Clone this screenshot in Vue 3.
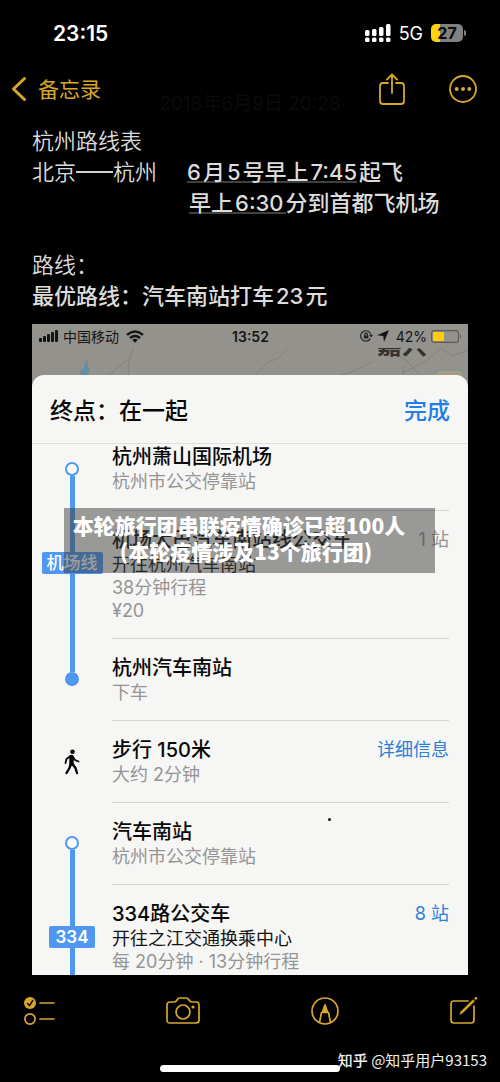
<script setup>
const stops = [
  { node: 'open', title: '杭州萧山国际机场', lines: ['杭州市公交停靠站'], first: true },
  {
    node: 'badge', badge: '机场线', title: '机场大巴汽车南站线公交车', toward: '开往杭州汽车南站',
    lines: ['38分钟行程', '¥20'], count: '1 站'
  },
  { node: 'closed', title: '杭州汽车南站', lines: ['下车'] },
  { node: 'walk', title: '步行 150米', lines: ['大约 2分钟'], link: '详细信息' },
  { node: 'open', title: '汽车南站', lines: ['杭州市公交停靠站'], speck: true },
  {
    node: 'badge', badge: '334', title: '334路公交车', toward: '开往之江交通换乘中心',
    lines: ['每 20分钟 · 13分钟行程'], link: '8 站', last: true
  }
]
</script>

<template>
  <div class="screen">
    <header>
      <div class="status">
        <time class="clock">23:15</time>
        <div class="status-right">
          <svg width="26" height="18" viewBox="0 0 26 18" fill="#fff" aria-hidden="true">
            <rect x="0" y="6" width="4.500" height="6" rx="1.500" /><rect x="7" y="5" width="4.500" height="7" rx="1.500" />
            <rect x="14" y="3" width="4.500" height="9" rx="1.500" /><rect x="21" y="0" width="4.500" height="12" rx="1.500" />
            <rect x="0" y="13.500" width="4.500" height="4.500" rx="1.500" /><rect x="7" y="13.500" width="4.500" height="4.500" rx="1.500" />
            <rect x="14" y="13.500" width="4.500" height="4.500" rx="1.500" /><rect x="21" y="13.500" width="4.500" height="4.500" rx="1.500" />
          </svg>
          <span class="network">5G</span>
          <span class="battery"><span class="battery-body">27</span><i class="battery-tip"></i></span>
        </div>
      </div>

      <nav class="nav">
        <button class="back" type="button">
          <svg width="16" height="26" viewBox="0 0 16 26" fill="none" stroke="currentColor" stroke-width="3" stroke-linecap="round" stroke-linejoin="round" aria-hidden="true">
            <path d="M13.500 2.500L2.500 13L13.500 23.500" />
          </svg>
          <span>备忘录</span>
        </button>
        <span class="edited">2018年6月9日 20:28</span>
        <div class="nav-actions">
          <button type="button" aria-label="共享">
            <svg width="26" height="32" viewBox="0 0 26 32" fill="none" stroke="currentColor" stroke-width="1.800" stroke-linecap="round" stroke-linejoin="round">
              <path d="M9 10H4Q1 10 1 13V28Q1 31 4 31H22Q25 31 25 28V13Q25 10 22 10H17M13 20V1.500M8 6.500L13 1.500L18 6.500" />
            </svg>
          </button>
          <button type="button" aria-label="更多">
            <svg width="28" height="28" viewBox="0 0 28 28" fill="none" stroke="currentColor" stroke-width="1.800">
              <circle cx="14" cy="14" r="13" />
              <g fill="currentColor" stroke="none"><circle cx="7.700" cy="14" r="2" /><circle cx="14" cy="14" r="2" /><circle cx="20.300" cy="14" r="2" /></g>
            </svg>
          </button>
        </div>
      </nav>
    </header>

    <main>
      <section class="note">
        <p class="plain">杭州路线表</p>
        <div class="flight">
          <p class="plain">北京<i class="dash"></i>杭州</p>
          <div class="strong">
            <p><u>6<span class="num-side">月</span>5<span class="num-side">号早上</span>7:45</u><span class="num-side">起飞</span></p>
            <p class="second"><u>早上<span class="num-side">6:30</span></u>分到首都飞机场</p>
          </div>
        </div>
        <p class="plain gap">路线：</p>
        <p class="strong">最优路线：汽车南站打车<span class="num-side">23</span>元</p>
      </section>

      <section class="shot">
        <div class="shot-status">
          <div class="carrier">
            <svg width="20" height="12" viewBox="0 0 20 12" fill="#151515" aria-hidden="true">
              <rect x="0" y="8" width="3" height="4" rx="1" /><rect x="4" y="6" width="3" height="6" rx="1" /><rect x="8" y="4" width="3" height="8" rx="1" /><rect x="12" y="2" width="3" height="10" rx="1" /><rect x="16" y="0" width="3" height="12" rx="1" />
            </svg>
            <span>中国移动</span>
            <svg class="wifi" width="18" height="13" viewBox="0 0 18 13" fill="none" stroke="#151515" stroke-width="2.400" aria-hidden="true">
              <path d="M1 4.800Q9 -2 17 4.800M4 8Q9 3.800 14 8" /><path d="M6.200 9.800Q9 7.600 11.800 9.800L9 12.800Z" fill="#151515" stroke="none" />
            </svg>
          </div>
          <time>13:52</time>
          <div class="indicators">
            <svg width="13" height="12" viewBox="0 0 13 12" fill="none" stroke="#222" stroke-width="1.200" aria-hidden="true">
              <path d="M10.400 8.600A5.200 5.200 0 1 1 11 5" /><path d="M9.200 5H13L11.100 7.500Z" fill="#222" stroke="none" />
              <rect x="3.800" y="5.300" width="4.600" height="3.200" fill="#222" stroke="none" /><path d="M4.700 5.500V4Q6.100 2.200 7.500 4V5.500" />
            </svg>
            <svg width="12" height="12" viewBox="0 0 12 12" fill="#151515" aria-hidden="true"><path d="M12 0L7 12L6.200 6L0 5.200Z" /></svg>
            <span>42%</span>
            <svg class="cell" width="31" height="13" viewBox="0 0 31 13" aria-hidden="true">
              <rect x="0.600" y="0.600" width="26.800" height="11.800" rx="2.500" fill="none" stroke="#5d5c58" stroke-width="1.200" />
              <rect x="2" y="2" width="11" height="9" rx="1" fill="#ffcb0c" /><path d="M29 4Q31 6.500 29 9Z" fill="#5d5c58" />
            </svg>
          </div>
        </div>
        <svg class="map" width="100%" height="40" viewBox="0 0 436 40" preserveAspectRatio="none" aria-hidden="true">
          <g fill="none" stroke="#83827e" stroke-width="1">
            <path d="M102 0Q94 15 97 28M99 8L88 18L75 28M255 0L247 10L236 14L224 27M341 13Q330 20 319 24L307 28M409 0L394 13L370 25M362 4L377 15L388 28M374 17Q369 22 373 29M409 0L420 8L436 2" />
          </g>
          <path d="M53 14L56 12V19L58 22L55 28H49L48 23L52 20Z" fill="#668da0" />
          <rect x="404" y="22" width="27" height="16" rx="2" fill="#a69b82" stroke="#71968a" />
          <text x="345" y="6" class="city">嘉兴</text>
        </svg>

        <div class="sheet">
          <div class="sheet-head">
            <h1>终点：在一起</h1>
            <button type="button">完成</button>
          </div>
          <ol class="steps">
            <li v-for="(s, i) in stops" :key="i" class="step" :class="{ first: s.first, last: s.last }">
              <div class="rail" :class="s.node">
                <i class="seg upper"></i>
                <svg v-if="s.node === 'walk'" width="16" height="26" viewBox="0 0 16 26" fill="none" stroke="#080808" stroke-linecap="round" stroke-linejoin="round" aria-label="步行">
                  <circle cx="8.500" cy="2.800" r="2.300" fill="#080808" stroke="none" />
                  <path d="M7.500 8V15" stroke-width="4.400" /><path d="M6.500 7L2.500 10L1.500 14M9 8L11 11L14.500 12.500" stroke-width="1.900" /><path d="M6.500 15.500L5.500 19L2.500 24M8.500 15L11.500 19L13 24" stroke-width="2.400" />
                </svg>
                <span v-else class="node">{{ s.badge }}</span>
                <i class="seg lower"></i>
              </div>
              <div class="detail">
                <div>
                  <h2>{{ s.title }}</h2>
                  <p v-if="s.toward" class="toward">{{ s.toward }}</p>
                  <p v-for="l in s.lines" :key="l">{{ l }}</p>
                </div>
                <a v-if="s.link" href="#">{{ s.link }}</a>
                <span v-else-if="s.count" class="count">{{ s.count }}</span>
                <i v-if="s.speck" class="speck"></i>
              </div>
            </li>
          </ol>
        </div>

        <div class="caption">
          <p class="caption-top">本轮旅行团串联疫情确诊已超100人</p>
          <p>(本轮疫情涉及13个旅行团)</p>
        </div>
      </section>
    </main>

    <footer>
      <div class="tools">
        <button type="button" aria-label="核对清单">
          <svg width="31" height="28" viewBox="0 0 31 28" fill="none" stroke="currentColor" stroke-width="1.700" stroke-linecap="round">
            <circle cx="6" cy="6" r="6" fill="currentColor" stroke="none" /><path d="M3.500 6.500L5.500 8.500L8.800 3.500" stroke="#17130a" stroke-width="1.500" />
            <circle cx="6" cy="22" r="5.100" /><path d="M16 6H30M16 22H30" />
          </svg>
        </button>
        <button type="button" aria-label="相机">
          <svg width="34" height="28" viewBox="0 0 34 28" fill="none" stroke="currentColor" stroke-width="1.700" stroke-linejoin="round">
            <path d="M4 5H8Q10 5 11 3Q12 1 14 1H20Q22 1 23 3Q24 5 26 5H30Q33 5 33 8V23Q33 26 30 26H4Q1 26 1 23V8Q1 5 4 5Z" />
            <circle cx="17" cy="15" r="7" /><circle cx="27" cy="10" r="1.600" fill="currentColor" stroke="none" />
          </svg>
        </button>
        <button type="button" aria-label="标记">
          <svg width="28" height="28" viewBox="0 0 28 28" fill="none" stroke="currentColor" stroke-width="1.700" stroke-linejoin="round">
            <circle cx="14" cy="14" r="13" /><path d="M8.500 25.500L10.500 15.500H17.500L19.500 25.500" /><path d="M10.500 15.500L13 8Q14 6 15 8L17.500 15.500Z" fill="currentColor" stroke="none" />
          </svg>
        </button>
        <button type="button" aria-label="新建">
          <svg width="28" height="28" viewBox="0 0 28 28" fill="none" stroke="currentColor" stroke-width="1.700" stroke-linecap="round" stroke-linejoin="round">
            <path d="M18 4H4Q1 4 1 7V23Q1 26 4 26H21Q24 26 24 23V9" /><path d="M10 17L11 14.500L23 2.700L24.500 4.200L12.500 16Z" fill="currentColor" stroke-width="0.600" /><path d="M25.600 1.600L26 1.200" stroke-width="2.400" />
          </svg>
        </button>
      </div>
      <div class="home"></div>
      <p class="credit"><b>知乎</b> @知乎用户93153</p>
    </footer>
  </div>
</template>

<style>
body { background: #000; }
</style>

<style scoped>
* { box-sizing: border-box; }
p, h1, h2, ol { margin: 0; padding: 0; }
button { padding: 0; border: 0; background: none; color: inherit; font: inherit; cursor: pointer; }
svg { display: block; flex: none; }

.screen {
  display: flex;
  flex-direction: column;
  min-height: 100vh;
  background: #000;
  color: #dcdcdc;
  font-family: Inter, "Noto Sans CJK SC", sans-serif;
}

.status { display: flex; align-items: center; justify-content: space-between; height: 66px; padding: 0 34px 0 53px; color: #fff; }
.clock { font-size: 21px; font-weight: 600; }
.status-right { display: flex; align-items: center; gap: 8px; }
.network { font-size: 18px; }
.battery { display: flex; align-items: center; gap: 1px; }
.battery-body {
  width: 32px; border-radius: 5px; line-height: 18px; text-align: center;
  background: linear-gradient(90deg, #fdd20d 9px, #818181 9px);
  color: #0a0a0a; font-size: 16px; font-weight: 700;
}
.battery-tip { width: 2px; height: 6px; border-radius: 0 2px 2px 0; background: #818181; }

.nav { position: relative; display: flex; align-items: center; justify-content: space-between; height: 45px; padding: 0 23px 0 11px; color: #d9a62c; }
.back { display: flex; align-items: center; gap: 11px; font-size: 21px; }
.back span { padding-bottom: 2px; }
.edited { position: absolute; inset: auto 0 -4px; text-align: center; font-size: 19px; line-height: 22px; color: #0b0b0b; pointer-events: none; }
.nav-actions { display: flex; align-items: center; gap: 44px; }

.note { padding: 15px 32px 12px; font-size: 22px; line-height: 31px; }
.plain { font-weight: 350; }
.flight { display: flex; gap: 30px; }
.dash { display: inline-block; width: 37px; height: 2px; vertical-align: 7px; background: #d0d0d0; }
.strong { font-weight: 500; }
.second { padding-left: 2px; }
.gap { padding-top: 31px; }
.num-side { margin: 0 2px; }
u { text-decoration: none; background: linear-gradient(#404040, #404040) 0 calc(100% - 2px) / 100% 2px no-repeat; }

.shot { position: relative; margin: 0 32px; background: #94928d; color: #151515; }
.shot-status { display: grid; grid-template-columns: 1fr auto 1fr; align-items: center; height: 24px; padding: 0 6px 0 7px; font-size: 14px; }
.shot-status time { font-weight: 600; }
.carrier, .indicators { display: flex; align-items: center; gap: 4px; }
.wifi { margin-left: 3px; }
.indicators { justify-content: flex-end; }
.indicators span { margin-left: 3px; }
.map { margin-bottom: -13px; overflow: hidden; }
.city { font-size: 25px; font-weight: 700; fill: #33322f; }

.sheet { position: relative; border-radius: 12px 12px 0 0; background: #f6f6f4; color: #080808; }
.sheet-head { display: flex; align-items: center; justify-content: space-between; height: 69px; padding: 0 18px; border-bottom: 1px solid #dededc; }
h1 { font-size: 23px; font-weight: 500; }
.sheet-head button { color: #217fe5; font-size: 23px; font-weight: 500; }

.steps { list-style: none; }
.step { display: grid; grid-template-columns: 80px 1fr; }
.detail { position: relative; display: flex; justify-content: space-between; margin-right: 19px; padding: 16px 0; border-bottom: 1px solid #d3d3d2; font-size: 18px; line-height: 23px; color: #949494; }
h2 { font-size: 20px; font-weight: 500; line-height: 26px; color: #080808; }
.toward { color: #141414; }
.detail a, .count { line-height: 26px; }
.detail a { color: #2b80d8; text-decoration: none; }
.first .detail { padding: 0 0 17px; }
.last .detail { padding-bottom: 2px; border-bottom: 0; }
.speck { position: absolute; left: 216px; top: 15px; width: 3px; height: 3px; border-radius: 50%; background: #111; }

.rail { display: flex; flex-direction: column; align-items: center; }
.seg { flex: 1; width: 5px; background: #4f98f2; }
.open .upper, .closed .lower, .walk .seg { background: none; }
.node { display: block; width: 14px; height: 14px; border: 2px solid #4f98f2; border-radius: 50%; background: #fff; }
.closed .node { background: #4f98f2; }
.open .lower, .closed .lower { flex: 0 0 35px; }
.badge .upper { flex: 0 0 41px; }
.badge .node { width: auto; height: 22px; padding: 0 5px; border: 0; border-radius: 2px; background: #4f98f2; color: #fff; font-size: 17px; font-weight: 500; line-height: 22px; }
.last .badge .node { padding: 0 7px; font-weight: 600; }

.caption {
  position: absolute; top: 184px; left: 32px; right: 33px; padding: 4px 7px 9px 0;
  background: rgba(60, 60, 60, .5); color: #fff; text-align: center;
  font: 900 21px/26px "Noto Sans CJK SC", sans-serif; white-space: nowrap;
}
.caption-top { padding-right: 14px; }

footer { position: relative; flex: 1; padding-bottom: 10px; color: #d9a62c; }
.tools { display: flex; align-items: center; justify-content: space-between; height: 71px; padding: 0 22px 0 24px; }
.home { width: 36%; height: 7px; margin: 19px auto 0; border-radius: 4px; background: #fff; }
.credit { position: absolute; right: 13px; bottom: 10px; color: #f0f0f0; font: 15px/24px "Noto Sans CJK SC", sans-serif; }
.credit b { font-weight: 500; }
</style>
